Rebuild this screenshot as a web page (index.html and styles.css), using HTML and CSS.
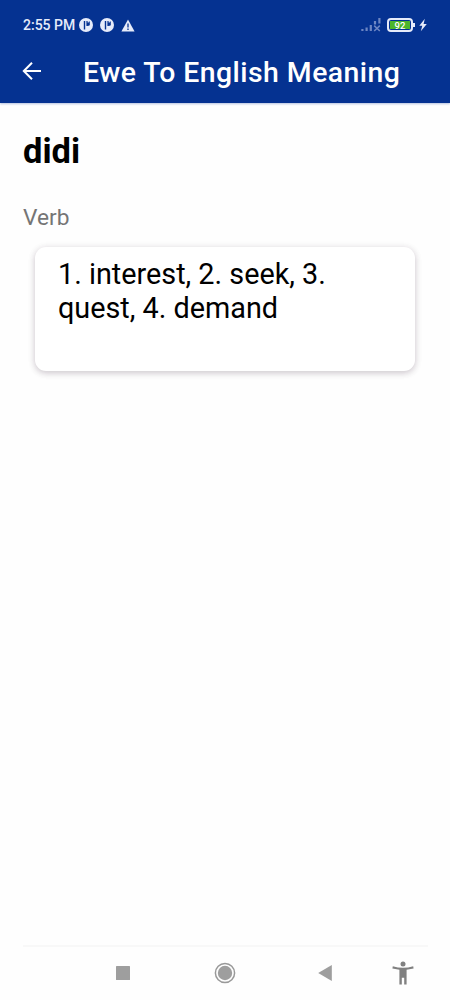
FILE: index.html
```
<!DOCTYPE html>
<html lang="en">
    <head>
        <meta charset="UTF-8">
        <meta name="viewport" content="width=device-width, initial-scale=1.0">
        <title>Ewe To English Meaning</title>
        <link rel="stylesheet" href="styles.css">
    </head>
    <body>
        <header>
            <div class="status">
                <span class="time">2:55 PM</span>
                <svg class="app-icon" width="14" height="14" viewBox="0 0 14 14">
                    <circle cx="7" cy="7" r="7" fill="#e6ebfa"/>
                    <path d="M4.8 3H6.2V11.6H4.8zM7.4 3H8.6V4.6H9.8V3.4H10.8V7.2Q9.8 8.2 7.4 8z" fill="#053291"/>
                </svg>
                <svg class="app-icon" width="14" height="14" viewBox="0 0 14 14">
                    <circle cx="7" cy="7" r="7" fill="#e6ebfa"/>
                    <path d="M4.8 3H6.2V11.6H4.8zM7.4 3H8.6V4.6H9.8V3.4H10.8V7.2Q9.8 8.2 7.4 8z" fill="#053291"/>
                </svg>
                <svg class="app-icon" width="14" height="13" viewBox="0 0 14 13">
                    <path d="M7 .5L13.6 12.5H.4z" fill="#e6ebfa"/>
                    <path d="M7 4.6V8.4M7 9.6V11" stroke="#053291" stroke-width="1.3"/>
                </svg>
                <div class="right">
                    <svg width="20" height="14" viewBox="0 0 20 14">
                        <path d="M1.4 11V13M5.6 9.5V13M9.8 7V13M14 3V6.5M18.4 0V5.5" stroke="#6d86c3" stroke-width="2.2"/>
                        <path d="M13.2 7.6L18.8 13M18.8 7.6L13.2 13" stroke="#6d86c3" stroke-width="1.5"/>
                    </svg>
                    <div class="battery"><span>92</span></div>
                    <svg class="bolt" width="8" height="14" viewBox="0 0 8 14">
                        <path d="M5.8 .8L.3 7.7H3.3L1.8 13.2L7.8 5.9H4.6z" fill="#e6ebfa"/>
                    </svg>
                </div>
            </div>
            <div class="toolbar">
                <svg width="20" height="20" viewBox="0 0 20 20">
                    <path d="M19 10H2M10 1.8L1.8 10L10 18.2" fill="none" stroke="#fff" stroke-width="2"/>
                </svg>
                <h1>Ewe To English Meaning</h1>
            </div>
        </header>

        <main>
            <h2>didi</h2>
            <p class="type">Verb</p>
            <div class="card">1. interest, 2. seek, 3. quest, 4. demand</div>
        </main>

        <footer>
            <!-- recents, home, back, accessibility -->
            <svg width="14" height="14" viewBox="0 0 14 14">
                <rect width="14" height="14" rx=".5" fill="#9e9e9e"/>
            </svg>
            <svg width="22" height="22" viewBox="0 0 22 22">
                <circle cx="11" cy="11" r="9.6" fill="none" stroke="#999" stroke-width="1.5"/>
                <circle cx="11" cy="11" r="7.2" fill="#9e9e9e"/>
            </svg>
            <svg width="14" height="16" viewBox="0 0 14 16">
                <path d="M.2 8L13.8 0V16z" fill="#9e9e9e"/>
            </svg>
            <svg width="22" height="24" viewBox="0 0 22 24">
                <circle cx="11" cy="3" r="2.5" fill="#808080"/>
                <path d="M.8 5.3Q11 8.3 21.2 5.3L21.6 7.5L14.6 8.8V23.5H12.2V16.8H9.8V23.5H7.4V8.8L.4 7.5z" fill="#808080"/>
            </svg>
        </footer>
    </body>
</html>
```
FILE: styles.css
```
* {
    box-sizing: border-box;
    margin: 0;
}

body {
    height: 1000px;
    display: flex;
    flex-direction: column;
    background-color: #fefefe;
    color: #000;
    font-family: Roboto, sans-serif;
}

svg {
    display: block;
    flex: none;
}

header {
    height: 103px;
    background-color: #053291;
    color: #fff;
    box-shadow: 0 1px 2px rgba(5, 50, 145, 0.3);
}

.status {
    display: flex;
    align-items: center;
    height: 50px;
    padding: 0 23px;
}

.time {
    width: 56px;
    color: #e6ebfa;
    font-size: 14px;
    font-weight: 500;
    line-height: 18px;
    white-space: nowrap;
}

.app-icon {
    margin-right: 7px;
}

.right {
    display: flex;
    align-items: center;
    margin-left: auto;
}

.battery {
    position: relative;
    width: 26px;
    height: 14px;
    margin: 0 6px 0 6px;
    border: 2px solid #e6ebfa;
    border-radius: 4px;
}

.battery::after {
    content: "";
    position: absolute;
    top: 3px;
    right: -4px;
    width: 2px;
    height: 4px;
    background-color: #e6ebfa;
}

.battery span {
    display: block;
    height: 8px;
    margin: 1px;
    background-color: #4cb52b;
    font-size: 9.5px;
    font-weight: 500;
    line-height: 9px;
    text-align: center;
}

.toolbar {
    display: flex;
    align-items: center;
    height: 42px;
    padding-left: 22px;
}

h1 {
    margin: 3px 0 0 41px;
    font-size: 28.4px;
    font-weight: 500;
    letter-spacing: 0.47px;
    line-height: 34px;
    white-space: nowrap;
}

main {
    flex: 1;
    padding: 28px 35px 0 23px;
}

h2 {
    font-size: 34.5px;
    font-weight: 700;
    line-height: 40px;
}

.type {
    margin-top: 33px;
    color: #757575;
    font-size: 22.7px;
    line-height: 27px;
}

.card {
    height: 124px;
    margin: 16px 0 0 12px;
    padding: 10px 50px 0 23px;
    border-radius: 11px;
    background-color: #fff;
    box-shadow: 0 2px 6px rgba(60, 40, 60, 0.22), 0 1px 10px rgba(60, 40, 60, 0.06);
    font-size: 28.8px;
    line-height: 34px;
}

footer {
    display: flex;
    align-items: center;
    height: 55px;
    margin: 0 22px 0 23px;
    border-top: 2px solid #f8f8f8;
    padding: 0 0 2px 93px;
}

footer svg:nth-child(2) {
    margin-left: 84px;
}

footer svg:nth-child(3) {
    margin-left: 82px;
}

footer svg:nth-child(4) {
    margin-left: 60px;
}
```
